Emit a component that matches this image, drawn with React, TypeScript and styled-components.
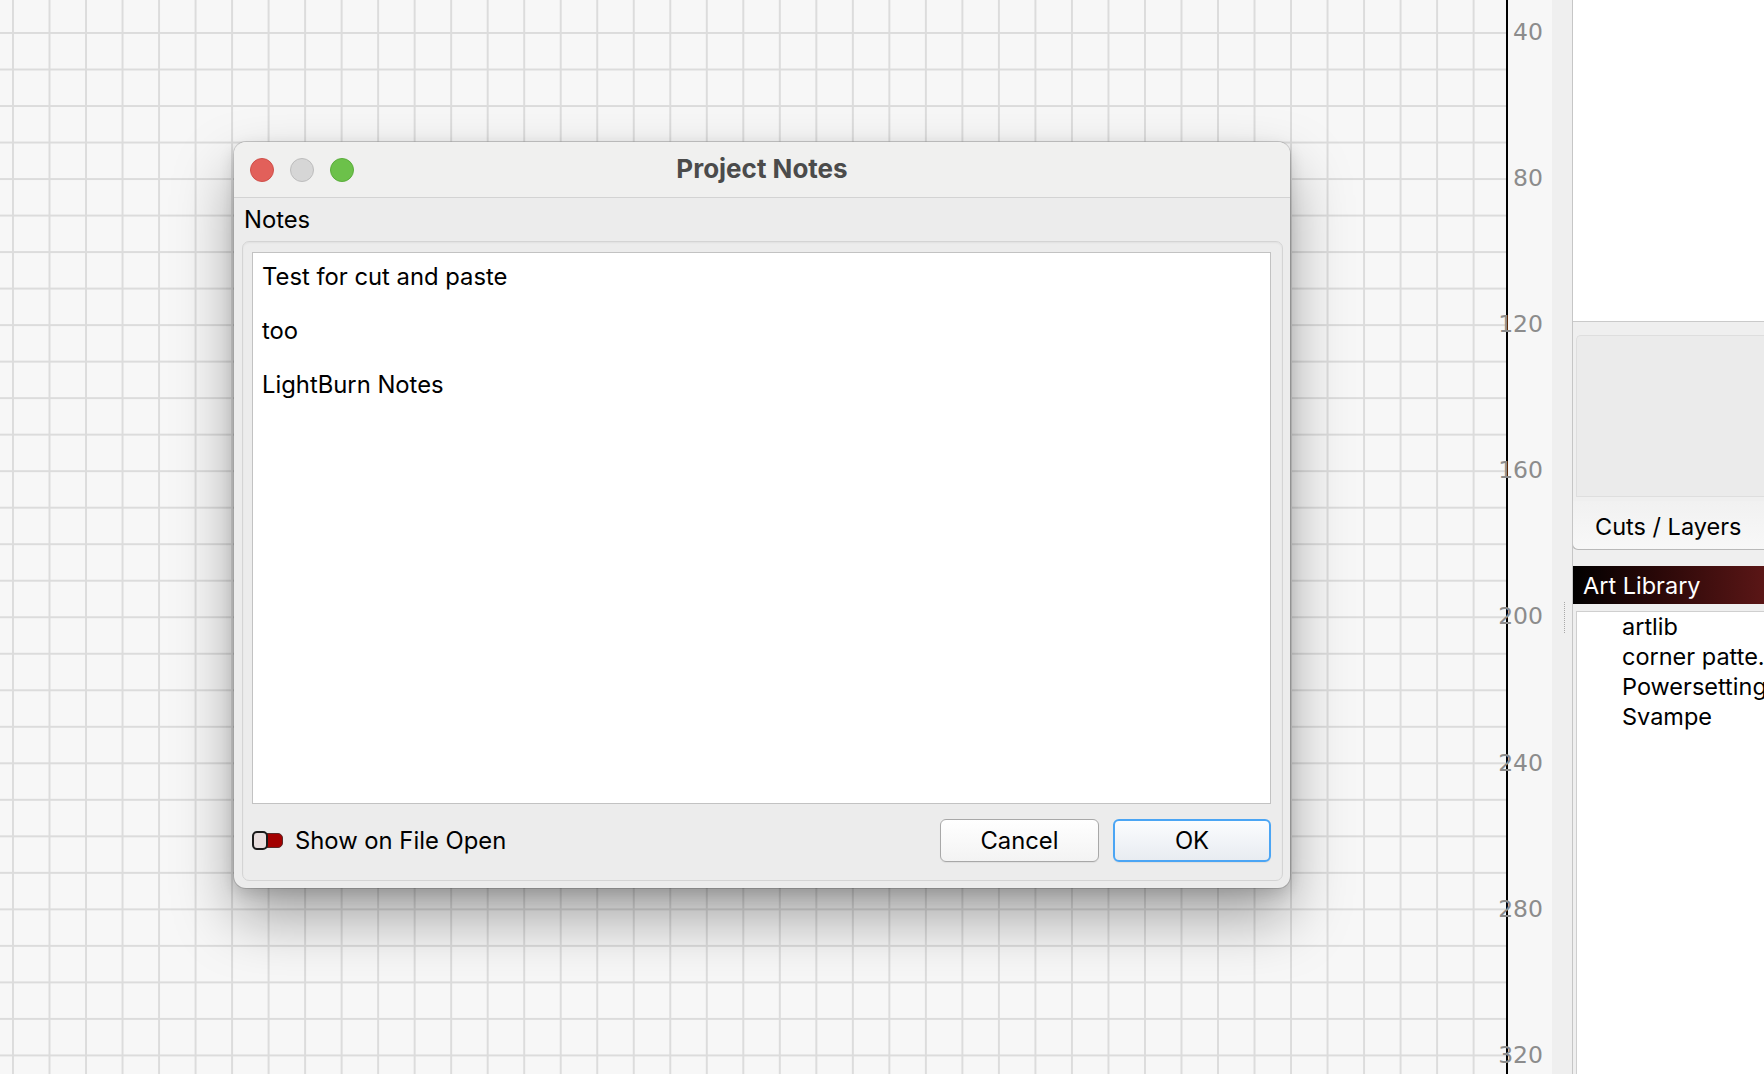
import styled, { createGlobalStyle } from "styled-components";

const GlobalStyle = createGlobalStyle`
  html, body {
    margin: 0;
    padding: 0;
    overflow: hidden;
  }
  body {
    font-family: Inter, "Noto Sans", "Liberation Sans", sans-serif;
    color: #000;
  }
`;

const Screen = styled.div`
  width: 1764px;
  height: 1074px;
  display: flex;
  overflow: hidden;
`;

const Canvas = styled.div`
  flex: 0 0 1506px;
  height: 100%;
  position: relative;
  background-color: #f7f7f7;
  background-image: linear-gradient(to right, #dcdcdc 2px, transparent 2px),
    linear-gradient(to bottom, #dcdcdc 2px, transparent 2px);
  background-size: 36.53px 36.53px;
  background-position: 12px 32px;
`;

const Ruler = styled.div`
  flex: 0 0 44px;
  height: 100%;
  position: relative;
  background: #f7f7f7;
  border-left: 2px solid #000;
`;

const Tick = styled.span`
  position: absolute;
  right: 9px;
  transform: translateY(-50%);
  font-family: "DejaVu Sans", "Liberation Sans", sans-serif;
  font-size: 23.5px;
  color: #8c8c8c;
  line-height: 1;
`;

const Splitter = styled.div`
  flex: 0 0 20px;
  background: #efefef;
  padding-top: 602px;
`;

const Grip = styled.div`
  width: 0;
  height: 31px;
  margin-left: 12px;
  border-left: 1px dotted #a8a8a8;
`;

const Dock = styled.div`
  flex: 1;
  display: flex;
  flex-direction: column;
  background: #efefef;
  border-left: 1px solid #c6c6c6;
  font-size: 23.5px;
  overflow: hidden;
`;

const TopPane = styled.div`
  height: 322px;
  flex: 0 0 322px;
  box-sizing: border-box;
  background: #fff;
  border-bottom: 1px solid #cacaca;
`;

const EmptyBox = styled.div`
  height: 160px;
  margin: 13px 0 0 3px;
  background: #ebebeb;
  border: 1px solid #dedede;
  border-right: none;
  border-top-left-radius: 5px;
`;

const Tab = styled.div`
  height: 49px;
  margin: 4px 0 0 -1px;
  display: flex;
  align-items: center;
  padding: 3px 0 0 22px;
  box-sizing: border-box;
  background: linear-gradient(#f1f1f1, #f8f8f8);
  border-left: 1px solid #b9b9b9;
  border-bottom: 1px solid #b9b9b9;
  border-bottom-left-radius: 6px;
`;

const ArtHeader = styled.div`
  height: 38px;
  margin: 16px 0 0 -2px;
  display: flex;
  align-items: center;
  padding-left: 12px;
  color: #fff;
  background: linear-gradient(to right, #000 0%, #2a0808 45%, #5a1616 100%);
`;

const FileList = styled.div`
  flex: 1;
  margin: 7px 0 0 3px;
  background: #fff;
  border-left: 1px solid #cfcfcf;
  border-top: 1px solid #cfcfcf;
`;

const FileItem = styled.div`
  height: 30px;
  line-height: 30px;
  padding-left: 45px;
  white-space: nowrap;
  overflow: hidden;
`;

const Window = styled.div`
  position: absolute;
  left: 234px;
  top: 142px;
  width: 1056px;
  height: 746px;
  display: flex;
  flex-direction: column;
  background: #ececec;
  border-radius: 12px;
  box-shadow: 0 30px 60px rgba(0, 0, 0, 0.34), 0 6px 16px rgba(0, 0, 0, 0.14),
    0 0 0 1px rgba(0, 0, 0, 0.14);
  overflow: hidden;
`;

const TitleBar = styled.div`
  height: 56px;
  flex: 0 0 56px;
  box-sizing: border-box;
  display: grid;
  grid-template-columns: 1fr auto 1fr;
  align-items: center;
  padding: 0 16px;
  background: #f0f0ef;
  border-bottom: 1px solid #d3d3d3;
`;

const Lights = styled.div`
  display: flex;
  gap: 16px;
`;

const Light = styled.span<{ $fill: string; $edge: string }>`
  width: 24px;
  height: 24px;
  border-radius: 50%;
  box-sizing: border-box;
  background: ${(p) => p.$fill};
  border: 1px solid ${(p) => p.$edge};
`;

const Title = styled.div`
  font-size: 26px;
  font-weight: 700;
  color: #4b4b4b;
  padding-bottom: 2px;
`;

const Body = styled.div`
  flex: 1;
  display: flex;
  flex-direction: column;
  padding: 0 7px 7px 8px;
  font-size: 23.8px;
`;

const Label = styled.div`
  height: 43px;
  display: flex;
  align-items: center;
  padding-left: 2px;
`;

const Group = styled.div`
  flex: 1;
  display: flex;
  flex-direction: column;
  padding: 10px 11px 0 9px;
  border: 1px solid #d4d4d4;
  border-radius: 7px;
  background: #ececec;
  box-shadow: inset 0 1px 2px rgba(0, 0, 0, 0.05);
`;

const TextBox = styled.div`
  flex: 1;
  background: #fff;
  border: 1px solid #c2c2c2;
  padding: 10px 9px;
  line-height: 27px;
`;

const Line = styled.div`
  min-height: 27px;
  white-space: pre;
`;

const Footer = styled.div`
  height: 43px;
  margin: 15px 0 18px;
  display: flex;
  align-items: center;
  gap: 14px;
`;

const Check = styled.label`
  flex: 1;
  display: flex;
  align-items: center;
  gap: 12px;
`;

const Toggle = styled.span`
  width: 31px;
  height: 19px;
  display: flex;
  align-items: center;
  position: relative;
`;

const ToggleTrack = styled.span`
  position: absolute;
  left: 10px;
  right: 0;
  top: 2px;
  height: 15px;
  box-sizing: border-box;
  background: #a30000;
  border: 1px solid #5a2a2a;
  border-radius: 0 5px 5px 0;
`;

const ToggleKnob = styled.span`
  position: relative;
  width: 16px;
  height: 19px;
  box-sizing: border-box;
  background: #e8dede;
  border: 2px solid #1a1a1a;
  border-radius: 5px;
`;

const Button = styled.button<{ $primary?: boolean }>`
  width: ${(p) => (p.$primary ? "158px" : "159px")};
  height: 43px;
  box-sizing: border-box;
  font-family: Inter, "Noto Sans", sans-serif;
  font-size: 23.8px;
  color: #000;
  border-radius: 6px;
  border: ${(p) => (p.$primary ? "2px solid #4ba5f4" : "1px solid #a8a8a8")};
  background: ${(p) =>
    p.$primary
      ? "linear-gradient(#fbfcfe, #e8ecf1)"
      : "linear-gradient(#ffffff, #f3f3f3)"};
  box-shadow: 0 1px 1px rgba(0, 0, 0, 0.06);
`;

const ticks = [40, 80, 120, 160, 200, 240, 280, 320];
const files = ["artlib", "corner patte...", "Powersettings", "Svampe"];
const notes = ["Test for cut and paste", "", "too", "", "LightBurn Notes"];

function App() {
  return (
    <>
      <GlobalStyle />
      <Screen>
        <Canvas>
          <Window>
            <TitleBar>
              <Lights>
                <Light $fill="#e2605a" $edge="#cf4f49" />
                <Light $fill="#d6d6d6" $edge="#bdbdbd" />
                <Light $fill="#6cc14a" $edge="#5aad3b" />
              </Lights>
              <Title>Project Notes</Title>
              <span />
            </TitleBar>
            <Body>
              <Label>Notes</Label>
              <Group>
                <TextBox>
                  {notes.map((n, i) => (
                    <Line key={i}>{n}</Line>
                  ))}
                </TextBox>
                <Footer>
                  <Check>
                    <Toggle>
                      <ToggleTrack />
                      <ToggleKnob />
                    </Toggle>
                    Show on File Open
                  </Check>
                  <Button>Cancel</Button>
                  <Button $primary>OK</Button>
                </Footer>
              </Group>
            </Body>
          </Window>
        </Canvas>
        <Ruler>
          {ticks.map((t, i) => (
            <Tick key={t} style={{ top: 33 + i * 146.1 }}>
              {t}
            </Tick>
          ))}
        </Ruler>
        <Splitter>
          <Grip />
        </Splitter>
        <Dock>
          <TopPane />
          <EmptyBox />
          <Tab>Cuts / Layers</Tab>
          <ArtHeader>Art Library</ArtHeader>
          <FileList>
            {files.map((f) => (
              <FileItem key={f}>{f}</FileItem>
            ))}
          </FileList>
        </Dock>
      </Screen>
    </>
  );
}

export default App;
